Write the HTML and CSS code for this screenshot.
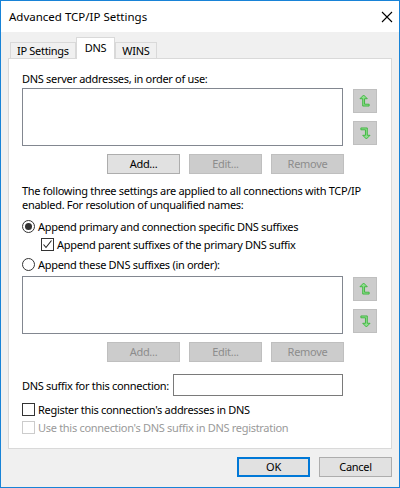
FILE: index.html
```html
<!DOCTYPE html>
<html lang="en">
<head>
    <meta charset="UTF-8">
    <title>Advanced TCP/IP Settings</title>
    <link rel="stylesheet" href="styles.css">
</head>
<body>

<div class="window">
    <div class="titlebar">
        <span class="title">Advanced TCP/IP Settings</span>
        <span class="close">
            <svg width="12" height="12" viewBox="0 0 12 12"><path d="M1 1 L11 11 M11 1 L1 11" stroke="#000" stroke-width="1.1" fill="none"/></svg>
        </span>
    </div>

    <div class="dialog">
        <div class="tabs">
            <div class="tab">IP Settings</div>
            <div class="tab active">DNS</div>
            <div class="tab">WINS</div>
        </div>

        <div class="panel">
            <div class="label">DNS server addresses, in order of use:</div>
            <div class="list-row">
                <div class="listbox"></div>
                <div class="arrows">
                    <div class="arrow">
                        <svg width="24" height="24" viewBox="0 0 24 24"><path d="M10.5 5.5 L6.5 9.5 L9.5 9.5 L9.5 17.5 L16.5 17.5 L16.5 15.5 L11.5 15.5 L11.5 9.5 L14.5 9.5 Z" fill="#8ee08e" stroke="#3cb43c" stroke-width="1"/></svg>
                    </div>
                    <div class="arrow">
                        <svg width="24" height="24" viewBox="0 0 24 24"><path d="M7.5 6.5 L14.5 6.5 L14.5 14.5 L17.5 14.5 L13.5 18.5 L9.5 14.5 L12.5 14.5 L12.5 8.5 L7.5 8.5 Z" fill="#8ee08e" stroke="#3cb43c" stroke-width="1"/></svg>
                    </div>
                </div>
            </div>
            <div class="btn-row">
                <div class="btn">Add...</div>
                <div class="btn disabled">Edit...</div>
                <div class="btn disabled">Remove</div>
            </div>

            <p class="note">The following three settings are applied to all connections with TCP/IP<br>enabled. For resolution of unqualified names:</p>

            <div class="option first"><span class="radio checked"></span>Append primary and connection specific DNS suffixes</div>
            <div class="option sub"><span class="check checked"><svg width="11" height="11" viewBox="0 0 11 11"><path d="M1.5 5.5 L4 8.5 L9.5 1.5" stroke="#222" stroke-width="1.1" fill="none"/></svg></span>Append parent suffixes of the primary DNS suffix</div>
            <div class="option gap"><span class="radio"></span>Append these DNS suffixes (in order):</div>

            <div class="list-row second">
                <div class="listbox"></div>
                <div class="arrows">
                    <div class="arrow">
                        <svg width="24" height="24" viewBox="0 0 24 24"><path d="M10.5 5.5 L6.5 9.5 L9.5 9.5 L9.5 17.5 L16.5 17.5 L16.5 15.5 L11.5 15.5 L11.5 9.5 L14.5 9.5 Z" fill="#8ee08e" stroke="#3cb43c" stroke-width="1"/></svg>
                    </div>
                    <div class="arrow">
                        <svg width="24" height="24" viewBox="0 0 24 24"><path d="M7.5 6.5 L14.5 6.5 L14.5 14.5 L17.5 14.5 L13.5 18.5 L9.5 14.5 L12.5 14.5 L12.5 8.5 L7.5 8.5 Z" fill="#8ee08e" stroke="#3cb43c" stroke-width="1"/></svg>
                    </div>
                </div>
            </div>
            <div class="btn-row">
                <div class="btn disabled">Add...</div>
                <div class="btn disabled">Edit...</div>
                <div class="btn disabled">Remove</div>
            </div>

            <div class="suffix-row">
                <span>DNS suffix for this connection:</span>
                <div class="textbox"></div>
            </div>

            <div class="option register"><span class="check"></span>Register this connection's addresses in DNS</div>
            <div class="option muted"><span class="check"></span>Use this connection's DNS suffix in DNS registration</div>
        </div>

        <div class="footer">
            <div class="btn ok">OK</div>
            <div class="btn">Cancel</div>
        </div>
    </div>
</div>

</body>
</html>
```

FILE: styles.css
```css
body {
    margin: 0;
    font-family: "Noto Sans", sans-serif;
    font-size: 11px;
    letter-spacing: -0.3px;
    color: #000;
}
.window {
    width: 400px;
    height: 488px;
    box-sizing: border-box;
    border: 1px solid #1883d7;
    background: #f0f0f0;
}
.titlebar {
    height: 31px;
    background: white;
    display: flex;
    align-items: center;
    justify-content: space-between;
    padding: 0 8px;
}
.title {
    font-size: 11.5px;
    letter-spacing: 0;
}
.close {
    display: flex;
    margin-right: -2px;
}
.dialog {
    padding: 5px 7px 0 7px;
}
.tabs {
    display: flex;
    align-items: flex-end;
    height: 21px;
    padding-left: 2px;
}
.tab {
    height: 15px;
    line-height: 15px;
    padding: 0 6px;
    border: 1px solid #d9d9d9;
    border-bottom: none;
    background: #f0f0f0;
}
.tab.active {
    height: 21px;
    line-height: 19px;
    padding: 0 8px;
    margin-bottom: -1px;
    background: white;
    position: relative;
    z-index: 1;
}
.panel {
    background: white;
    border: 1px solid #d9d9d9;
    padding: 12px 13px 13px 13px;
    height: 364px;
    box-sizing: content-box;
}
.label {
    line-height: 16px;
}
.list-row {
    display: flex;
    margin-top: 1px;
}
.list-row.second {
    margin-top: 4px;
}
.listbox {
    width: 319px;
    height: 56px;
    border: 1px solid #828790;
}
.arrows {
    display: flex;
    flex-direction: column;
    gap: 8px;
    margin: 1px 0 0 10px;
}
.arrow {
    width: 22px;
    height: 22px;
    background: #cccccc;
    border: 1px solid #bfbfbf;
    display: flex;
    align-items: center;
    justify-content: center;
}
.btn-row {
    display: flex;
    gap: 9px;
    margin: 8px 0 0 85px;
}
.btn {
    width: 71px;
    height: 18px;
    line-height: 18px;
    text-align: center;
    background: #e1e1e1;
    border: 1px solid #adadad;
}
.btn.disabled {
    background: #cccccc;
    border-color: #bfbfbf;
    color: #8c8c8c;
}
.note {
    margin: 10px 0 0 0;
    line-height: 14px;
}
.option {
    display: flex;
    align-items: center;
    height: 16px;
    margin-top: 2px;
}
.option.first {
    margin-top: 6px;
}
.option.sub {
    padding-left: 19px;
}
.option.gap {
    margin-top: 4px;
}
.radio {
    width: 11px;
    height: 11px;
    border: 1px solid #333;
    border-radius: 50%;
    margin-right: 3px;
    display: flex;
    align-items: center;
    justify-content: center;
}
.radio.checked::after {
    content: "";
    width: 7px;
    height: 7px;
    border-radius: 50%;
    background: #333;
}
.check {
    width: 11px;
    height: 11px;
    border: 1px solid #333;
    margin-right: 3px;
    display: flex;
    align-items: center;
    justify-content: center;
}
.suffix-row {
    display: flex;
    align-items: center;
    justify-content: space-between;
    margin-top: 12px;
    width: 321px;
}
.textbox {
    width: 168px;
    height: 20px;
    border: 1px solid #7a7a7a;
}
.option.register {
    margin-top: 5px;
}
.option.muted {
    color: #9a9a9a;
}
.option.muted .check {
    border-color: #cccccc;
}
.footer {
    display: flex;
    justify-content: flex-end;
    gap: 9px;
    margin-top: 8px;
}
.btn.ok {
    width: 69px;
    height: 16px;
    line-height: 16px;
    border: 2px solid #0078d7;
}
```
